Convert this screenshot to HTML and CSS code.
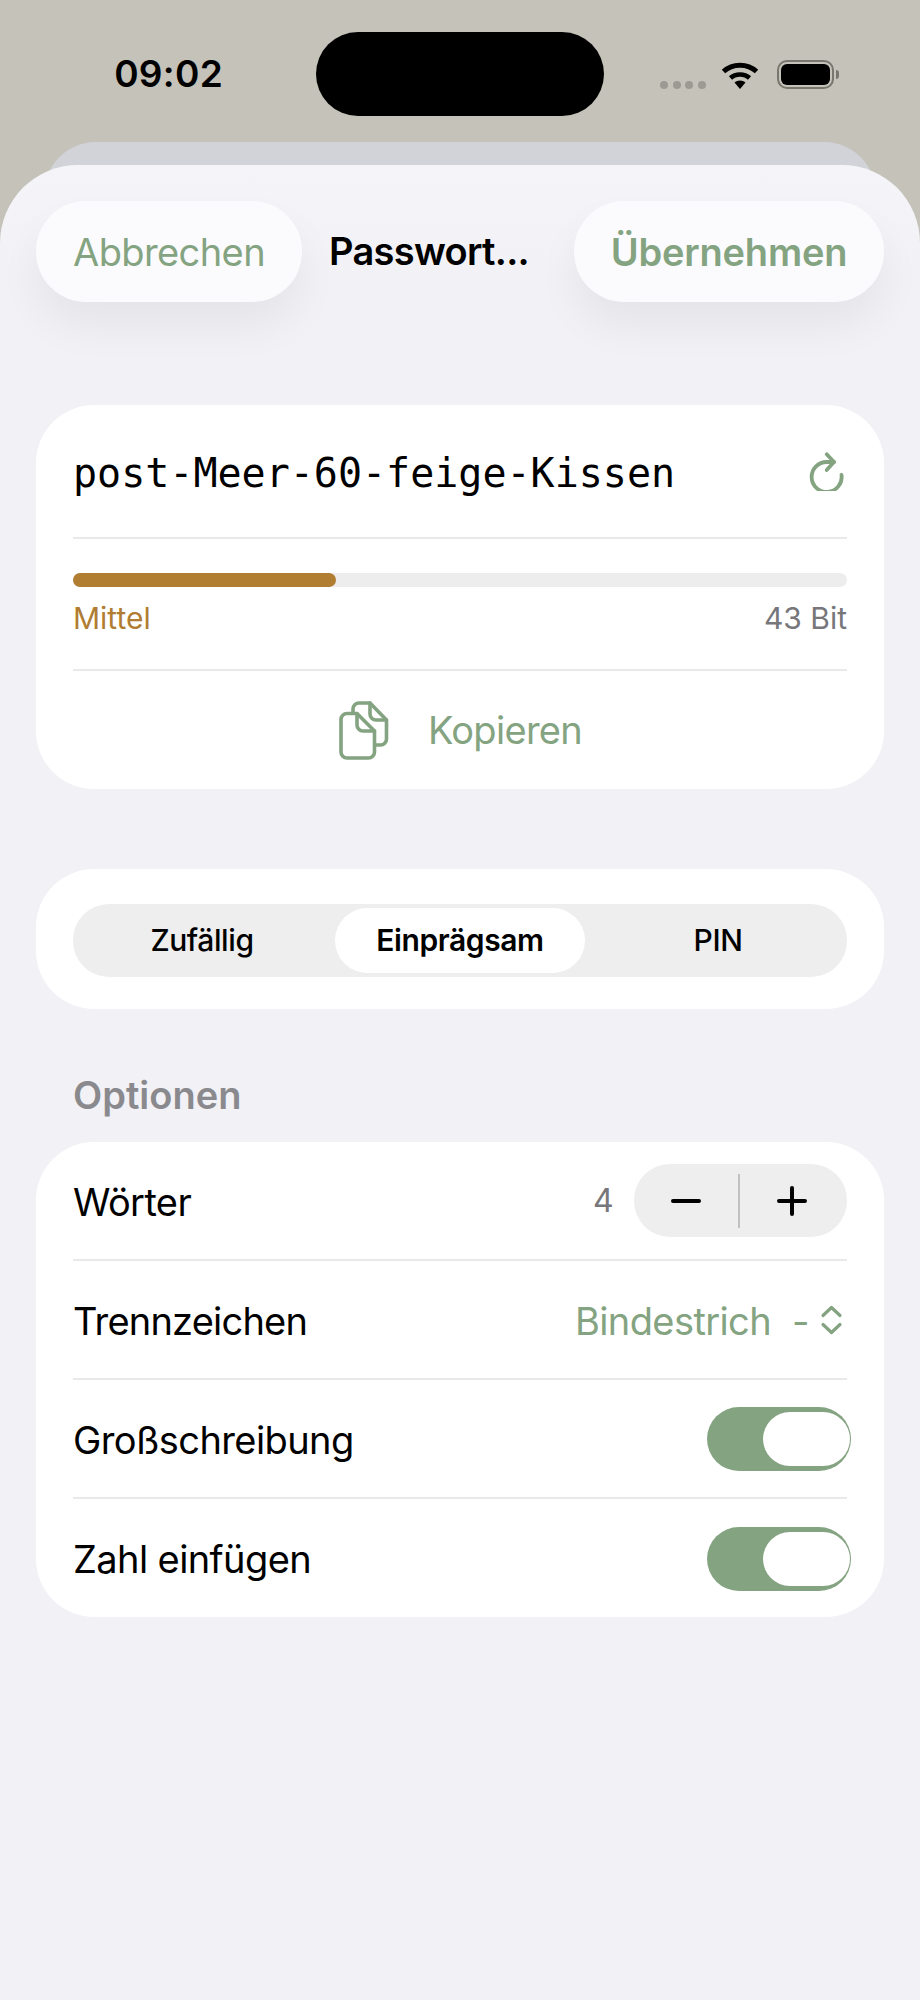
FILE: index.html
```html
<!DOCTYPE html>
<html lang="de">
<head>
    <meta charset="UTF-8">
    <meta name="viewport" content="width=device-width, initial-scale=1.0">
    <title>Passwort</title>
    <link rel="stylesheet" href="styles.css">
</head>
<body>
    <div class="screen">
        <div class="status-bar">
            <div class="time">09:02</div>
            <div class="island"></div>
            <div class="status-icons">
                <div class="signal"><i></i><i></i><i></i><i></i></div>
                <svg class="wifi" width="38" height="30" viewBox="0 0 38 30">
                    <path d="M2.5 11.5C11.5 3 26.5 3 35.5 11.5" fill="none" stroke="#000" stroke-width="5"/>
                    <path d="M9.5 18C14.5 13.3 23.5 13.3 28.5 18" fill="none" stroke="#000" stroke-width="4.6"/>
                    <path d="M13.5 22.6C16.5 19.8 21.5 19.8 24.5 22.6L19 29Z" fill="#000"/>
                </svg>
                <div class="battery"><div class="battery-fill"></div></div>
                <div class="battery-cap"></div>
            </div>
        </div>

        <div class="back-sheet"></div>

        <div class="sheet">
            <div class="header">
                <div class="pill-btn cancel">Abbrechen</div>
                <div class="title">Passwort...</div>
                <div class="pill-btn apply">Übernehmen</div>
            </div>

            <div class="card password-card">
                <div class="password-row">
                    <span class="password">post-Meer-60-feige-Kissen</span>
                    <svg class="refresh" width="40" height="40" viewBox="0 0 40 40" fill="none" stroke="#84a381" stroke-width="3.8" stroke-linecap="round" stroke-linejoin="round">
                        <path d="M35.5 24A15 15 0 1 1 21 11H28"/>
                        <path d="M20.7 3.3L28 11L20.7 19"/>
                    </svg>
                </div>
                <div class="strength">
                    <div class="bar"><div class="bar-fill" style="width: 34%"></div></div>
                    <div class="strength-labels">
                        <span class="level">Mittel</span>
                        <span class="bits">43 Bit</span>
                    </div>
                </div>
                <div class="copy-row">
                    <svg width="60" height="70" viewBox="0 0 60 70" fill="none" stroke="#84a381" stroke-width="3.6" stroke-linecap="round" stroke-linejoin="round">
                        <path d="M23 18.5H13a6 6 0 0 0-6 6V57a6 6 0 0 0 6 6H34.5a6 6 0 0 0 6-6V36Z"/>
                        <path d="M23 18.5V30a6 6 0 0 0 6 6H40.5"/>
                        <path d="M19 18V14a6 6 0 0 1 6-6H36L52.5 25V44a6 6 0 0 1-6 6H41"/>
                        <path d="M36 8V19a6 6 0 0 0 6 6H52.5"/>
                    </svg>
                    <span>Kopieren</span>
                </div>
            </div>

            <div class="card mode-card">
                <div class="segment">
                    <div class="segment-item">Zufällig</div>
                    <div class="segment-item active">Einprägsam</div>
                    <div class="segment-item">PIN</div>
                </div>
            </div>

            <div class="section-label">Optionen</div>

            <div class="card options-card">
                <div class="option">
                    <span>Wörter</span>
                    <div class="option-right">
                        <span class="count">4</span>
                        <div class="stepper">
                            <div class="step minus">
                                <svg width="30" height="30" viewBox="0 0 30 30" stroke="#000" stroke-width="4" stroke-linecap="round"><path d="M2 15H28"/></svg>
                            </div>
                            <div class="step-sep"></div>
                            <div class="step plus">
                                <svg width="30" height="30" viewBox="0 0 30 30" stroke="#000" stroke-width="4" stroke-linecap="round"><path d="M2 15H28M15 2V28"/></svg>
                            </div>
                        </div>
                    </div>
                </div>
                <div class="option">
                    <span class="tight">Trennzeichen</span>
                    <div class="picker">
                        <span>Bindestrich</span>
                        <span class="picker-dash">-</span>
                        <svg width="25" height="32" viewBox="0 0 25 32" fill="none" stroke="#84a381" stroke-width="3.2" stroke-linecap="round" stroke-linejoin="round">
                            <path d="M4 11.5L12.5 3.5L21 11.5"/>
                            <path d="M4 20.5L12.5 28.5L21 20.5"/>
                        </svg>
                    </div>
                </div>
                <div class="option">
                    <span>Großschreibung</span>
                    <div class="toggle"><div class="knob"></div></div>
                </div>
                <div class="option">
                    <span>Zahl einfügen</span>
                    <div class="toggle"><div class="knob"></div></div>
                </div>
            </div>
        </div>
    </div>
</body>
</html>
```

FILE: styles.css
```css
* {
    box-sizing: border-box;
}

body {
    margin: 0;
    background-color: #c4c2b9;
    font-family: "Inter", "Liberation Sans", sans-serif;
    color: #000;
}

.screen {
    width: 920px;
    height: 2000px;
    overflow: hidden;
}

.status-bar {
    display: grid;
    grid-template-columns: 316px 288px 316px;
    height: 142px;
    padding-top: 32px;
}

.time {
    height: 84px;
    padding-right: 93px;
    line-height: 84px;
    text-align: right;
    font-size: 37px;
    font-weight: 600;
    letter-spacing: 0.3px;
}

.island {
    height: 84px;
    border-radius: 42px;
    background: #000;
}

.status-icons {
    display: flex;
    align-items: flex-start;
    padding: 28px 0 0 56px;
}

.signal {
    display: flex;
    gap: 4.5px;
    margin-top: 21px;
    margin-right: 15px;
}

.signal i {
    width: 8px;
    height: 8px;
    border-radius: 50%;
    background: #9b9a93;
}

.wifi {
    margin-right: 18px;
}

.battery {
    width: 57px;
    height: 29px;
    padding: 2px;
    border: 2px solid #77776f;
    border-radius: 10px;
}

.battery-fill {
    height: 100%;
    border-radius: 6px;
    background: #000;
}

.battery-cap {
    width: 3px;
    height: 9px;
    margin: 10px 0 0 2px;
    border-radius: 0 3px 3px 0;
    background: #77776f;
}

.back-sheet {
    height: 60px;
    margin: 0 44px -37px;
    border-radius: 52px 52px 0 0;
    background: #d2d3d8;
}

.sheet {
    position: relative;
    height: 1835px;
    padding: 36px 36px 0;
    border-radius: 78px 78px 0 0;
    background: linear-gradient(#f5f5f9, #f1f1f6 110px);
}

.header {
    display: flex;
    align-items: center;
    height: 101px;
}

.pill-btn {
    height: 101px;
    border-radius: 50px;
    line-height: 103px;
    text-align: center;
    font-size: 38px;
    color: #84a381;
    background: #fbfbfe;
    box-shadow: 0 24px 44px rgba(0, 0, 0, 0.055);
}

.cancel {
    width: 266px;
    letter-spacing: -0.6px;
}

.apply {
    width: 310px;
    margin-left: auto;
    font-weight: 600;
    letter-spacing: -0.2px;
}

.title {
    margin-left: 27px;
    line-height: 103px;
    font-size: 38px;
    font-weight: 600;
    letter-spacing: -0.7px;
}

.card {
    border-radius: 58px;
    background: #fff;
}

.password-card {
    margin-top: 103px;
    padding: 0 37px;
}

.password-row {
    display: flex;
    justify-content: space-between;
    align-items: center;
    height: 134px;
    border-bottom: 2px solid #e9e9eb;
}

.password {
    padding-top: 4px;
    font-family: "DejaVu Sans Mono", "Liberation Mono", monospace;
    font-size: 40px;
}

.refresh {
    margin-right: 1px;
}

.strength {
    height: 132px;
    padding-top: 34px;
    border-bottom: 2px solid #e9e9eb;
}

.bar {
    height: 14px;
    border-radius: 7px;
    background: #ededee;
}

.bar-fill {
    height: 100%;
    border-radius: 7px;
    background: #b07d33;
}

.strength-labels {
    display: flex;
    justify-content: space-between;
    margin-top: 13px;
    line-height: 36px;
    font-size: 30px;
}

.level {
    color: #b07d33;
}

.bits {
    color: #77777b;
}

.copy-row {
    display: flex;
    justify-content: center;
    align-items: center;
    gap: 34px;
    height: 118px;
    padding-right: 4px;
    font-size: 38px;
    letter-spacing: -0.7px;
    color: #84a381;
}

.mode-card {
    margin-top: 80px;
    padding: 35px 37px 32px;
}

.segment {
    display: grid;
    grid-template-columns: repeat(3, 1fr);
    height: 73px;
    border-radius: 36px;
    background: #eeeeef;
}

.segment-item {
    margin: 4px;
    border-radius: 33px;
    line-height: 65px;
    text-align: center;
    font-size: 30px;
    font-weight: 500;
    letter-spacing: -0.4px;
}

.segment-item.active {
    font-weight: 600;
    background: #fff;
}

.section-label {
    margin: 64px 0 25px 37px;
    line-height: 44px;
    font-size: 38px;
    font-weight: 600;
    color: #8a8a8e;
}

.options-card {
    height: 475px;
    padding: 0 37px;
}

.option {
    display: flex;
    justify-content: space-between;
    align-items: center;
    height: 119px;
    border-bottom: 2px solid #e9e9eb;
    font-size: 38px;
    letter-spacing: -0.6px;
}

.option:last-child {
    border-bottom: 0;
}

.option > span {
    padding-top: 2px;
}

.option:last-child > span {
    padding-top: 0;
}

.option > .tight {
    letter-spacing: -0.8px;
}

.option-right {
    display: flex;
    align-items: center;
    gap: 21px;
}

.count {
    font-size: 32px;
    color: #77777b;
}

.stepper {
    display: flex;
    align-items: center;
    width: 213px;
    height: 73px;
    border-radius: 36px;
    background: #eeeeef;
}

.step {
    display: flex;
    justify-content: center;
    align-items: center;
}

.minus {
    width: 104px;
}

.plus {
    flex: 1;
    padding-right: 3px;
}

.step-sep {
    width: 2px;
    height: 54px;
    background: #c0c0c2;
}

.picker {
    display: flex;
    align-items: center;
    padding: 2px 3px 0 0;
    color: #84a381;
}

.picker-dash {
    margin: 0 10px 0 21px;
}

.picker svg {
    margin-top: -2px;
}

.toggle {
    display: flex;
    justify-content: flex-end;
    align-items: center;
    width: 144px;
    height: 64px;
    margin-right: -4px;
    padding-right: 1px;
    border-radius: 32px;
    background: #84a381;
}

.knob {
    width: 87px;
    height: 54px;
    border-radius: 27px;
    background: #fff;
}
```
